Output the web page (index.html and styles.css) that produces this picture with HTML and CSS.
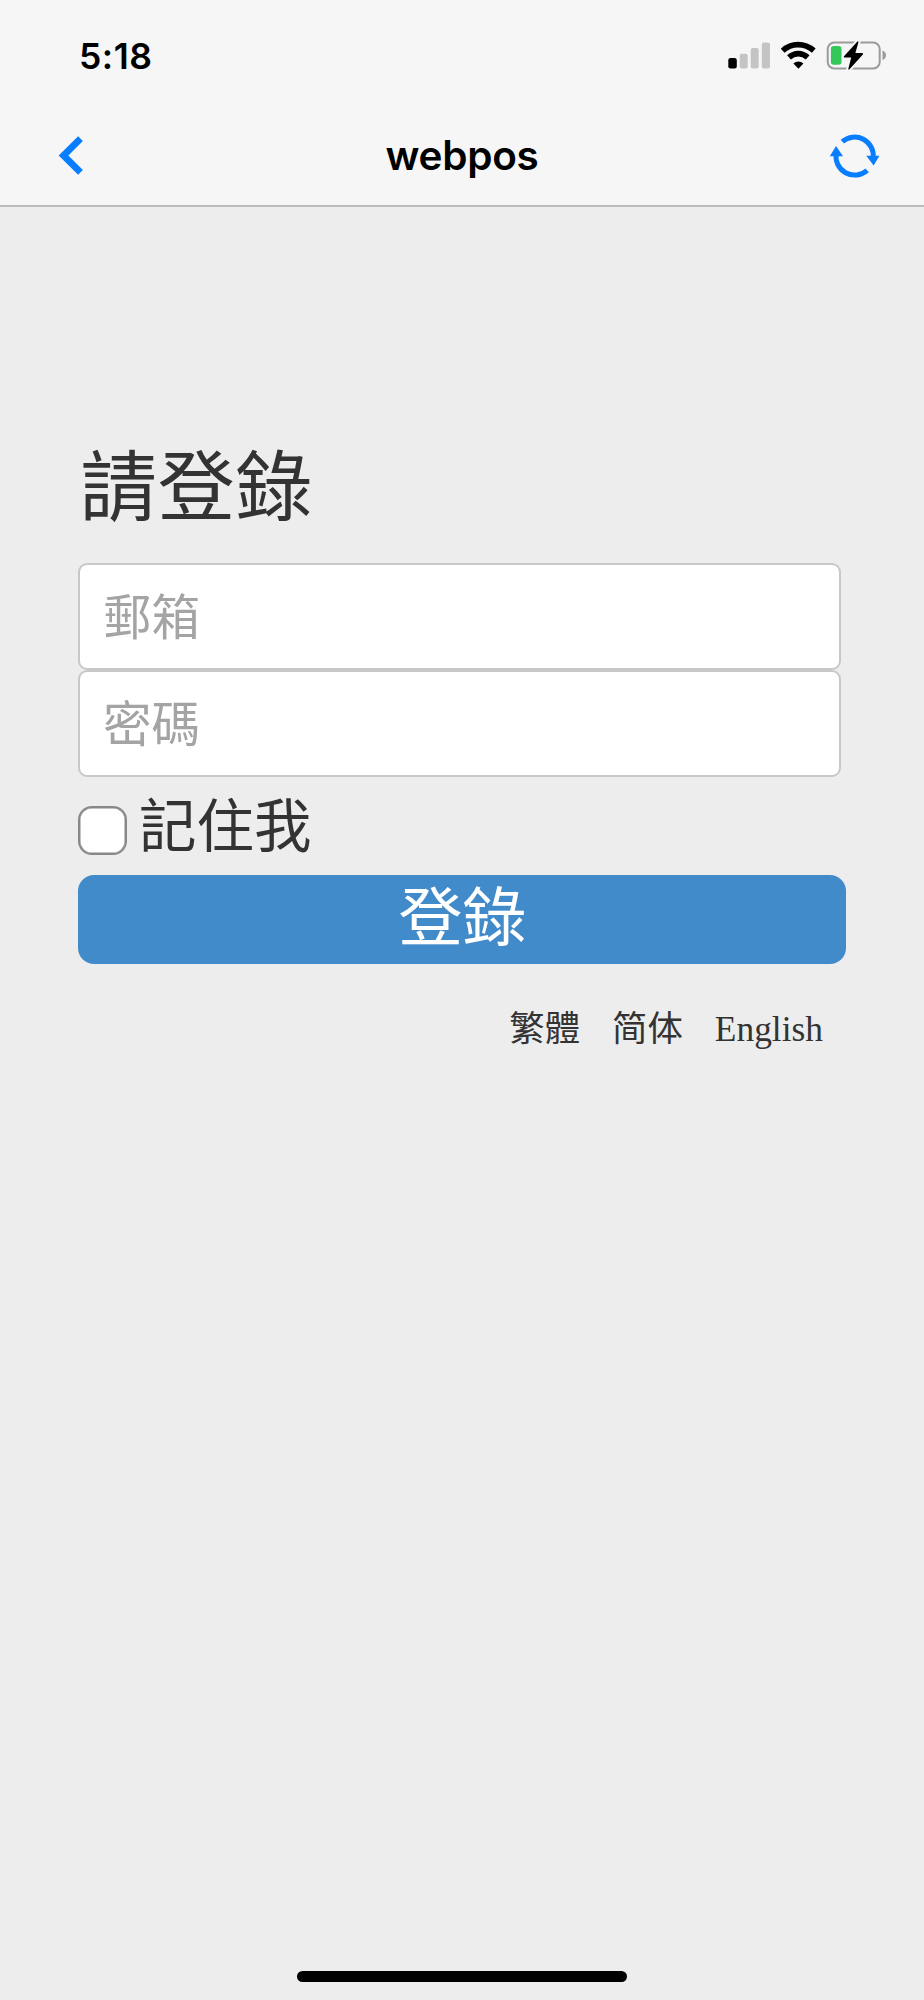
FILE: index.html
```html
<!DOCTYPE html>
<html lang="zh-Hant">
<head>
<meta charset="utf-8">
<title>webpos</title>
<link rel="stylesheet" href="styles.css">
</head>
<body>
<div class="screen">
  <header class="header">
    <div class="status">
      <span class="time">5:18</span>
      <svg class="indicators" width="160" height="32" viewBox="0 0 160 32">
        <rect x="0.3" y="18" width="8.5" height="10.5" rx="2.2" fill="#000"/>
        <rect x="11.7" y="13.8" width="8" height="14.7" rx="2" fill="#c4c4c4"/>
        <rect x="22.7" y="8" width="8" height="20.5" rx="2" fill="#c4c4c4"/>
        <rect x="33.8" y="2.4" width="8.2" height="26.1" rx="2" fill="#c4c4c4"/>
        <g fill="none" stroke="#000" stroke-width="5.6">
          <path d="M54.7 10.7C63.5 2.6 76.5 2.6 85.8 10.7"/>
          <path d="M61 17.4C66.5 12.3 74 12.3 79.7 17.4"/>
        </g>
        <path d="M65.4 23.6C68.4 20.8 72.4 20.8 75.4 23.6L70.4 28.7Z" fill="#000"/>
        <rect x="99.7" y="2.6" width="52" height="25.8" rx="6.5" fill="none" stroke="#9b9b9b" stroke-width="2"/>
        <rect x="102.9" y="6" width="10.6" height="18.8" rx="2.8" fill="#34c759"/>
        <path d="M154.5 10.5C159.2 12 159.2 18.5 154.5 20Z" fill="#9b9b9b"/>
        <path d="M129.4 1.5L115.8 16.6Q115.5 17.6 116.7 17.6H123.2L120.2 29.2Q120.5 30 121.5 29.2L135.1 14.2Q135.5 13 134.2 12.9H127.4L130.5 2Q130.1 1 129.4 1.5Z" fill="#000" stroke="#f6f6f6" stroke-width="4" paint-order="stroke"/>
      </svg>
    </div>
    <nav class="nav">
      <svg class="back" width="30" height="44" viewBox="0 0 30 44">
        <path d="M23.5 4.7L6.5 21.5L23.5 38.3" fill="none" stroke="#087eff" stroke-width="6.8"/>
      </svg>
      <h1 class="title">webpos</h1>
      <svg class="reload" width="52" height="48" viewBox="0 0 52 48">
        <g fill="none" stroke="#087eff" stroke-width="5">
          <path d="M13.3 8.7A18.7 18.7 0 0 1 44.2 25"/>
          <path d="M38.2 37.3A18.7 18.7 0 0 1 7.3 20"/>
        </g>
        <path d="M37.3 22.8H50.5L44.6 32.6Z M0.8 23.2H14L7 13Z" fill="#087eff"/>
      </svg>
    </nav>
  </header>
  <main class="content">
    <h2 class="heading">請登錄</h2>
    <input class="field" type="email" placeholder="郵箱">
    <input class="field" type="password" placeholder="密碼">
    <label class="remember"><input class="check" type="checkbox"><span class="remember-text">記住我</span></label>
    <button class="submit" type="button">登錄</button>
    <div class="languages">
      <a>繁體</a><a lang="zh-Hans">简体</a><a class="english" lang="en">English</a>
    </div>
  </main>
  <div class="home-bar"></div>
</div>
</body>
</html>
```
FILE: styles.css
```css
* {
  box-sizing: border-box;
}

body {
  margin: 0;
  background: #ededed;
  color: #333;
  font-family: "Noto Sans CJK TC", sans-serif;
}

.screen {
  display: flex;
  flex-direction: column;
  width: 924px;
  height: 2000px;
  overflow: hidden;
}

.header {
  height: 207px;
  flex: none;
  background: #f6f6f6;
  border-bottom: 2px solid #bdbdbd;
  color: #000;
  font-family: Inter, sans-serif;
}

.status {
  display: flex;
  justify-content: space-between;
  align-items: center;
  height: 112px;
  padding: 0 36px 0 79px;
}

.time {
  padding-top: 1px;
  font-size: 35.5px;
  font-weight: 600;
  line-height: 40px;
  letter-spacing: 0.5px;
}

.nav {
  display: grid;
  grid-template-columns: 200px 1fr 200px;
  align-items: center;
  height: 88px;
}

.back {
  margin-left: 57px;
}

.title {
  margin: 0;
  text-align: center;
  font-size: 40.5px;
  font-weight: 600;
  line-height: 48px;
  letter-spacing: -0.3px;
}

.reload {
  justify-self: end;
  margin: 2px 43px 0 0;
}

.content {
  display: flex;
  flex-direction: column;
  flex: 1;
  padding: 230px 78px 0;
}

.heading {
  margin: 0 0 36px 2px;
  font-size: 77px;
  font-weight: 400;
  line-height: 90px;
  letter-spacing: 0.8px;
}

.field {
  width: 763px;
  height: 107px;
  padding: 0 24px 6px 23px;
  border: 2px solid #c8c8c8;
  border-radius: 9px;
  background: #fff;
  font: 400 48.5px "Noto Sans CJK TC", sans-serif;
}

.field::placeholder {
  color: #a4a4a4;
}

.remember {
  display: flex;
  align-items: center;
  height: 98px;
  font-size: 57.5px;
  line-height: 90px;
}

.remember-text {
  padding-bottom: 8px;
}

.check {
  appearance: none;
  width: 49px;
  height: 49px;
  margin: 9px 12px 0 0;
  border: 2px solid #888;
  border-radius: 14px;
  background: #fff;
  box-shadow: inset 0 0 0 0.5px #888;
}

.submit {
  height: 89px;
  padding: 0 0 14px 1px;
  border: 0;
  border-radius: 16px;
  background: #428bca;
  color: #fff;
  font: 400 64px/75px "Noto Sans CJK TC", sans-serif;
}

.languages {
  display: flex;
  justify-content: flex-end;
  align-items: baseline;
  gap: 32px;
  padding: 35px 23px 0 0;
  font-size: 35.4px;
  line-height: 54px;
}

.english {
  font-family: "Liberation Serif", serif;
}

.home-bar {
  align-self: center;
  width: 330px;
  height: 11px;
  margin-bottom: 18px;
  border-radius: 6px;
  background: #000;
}
```
